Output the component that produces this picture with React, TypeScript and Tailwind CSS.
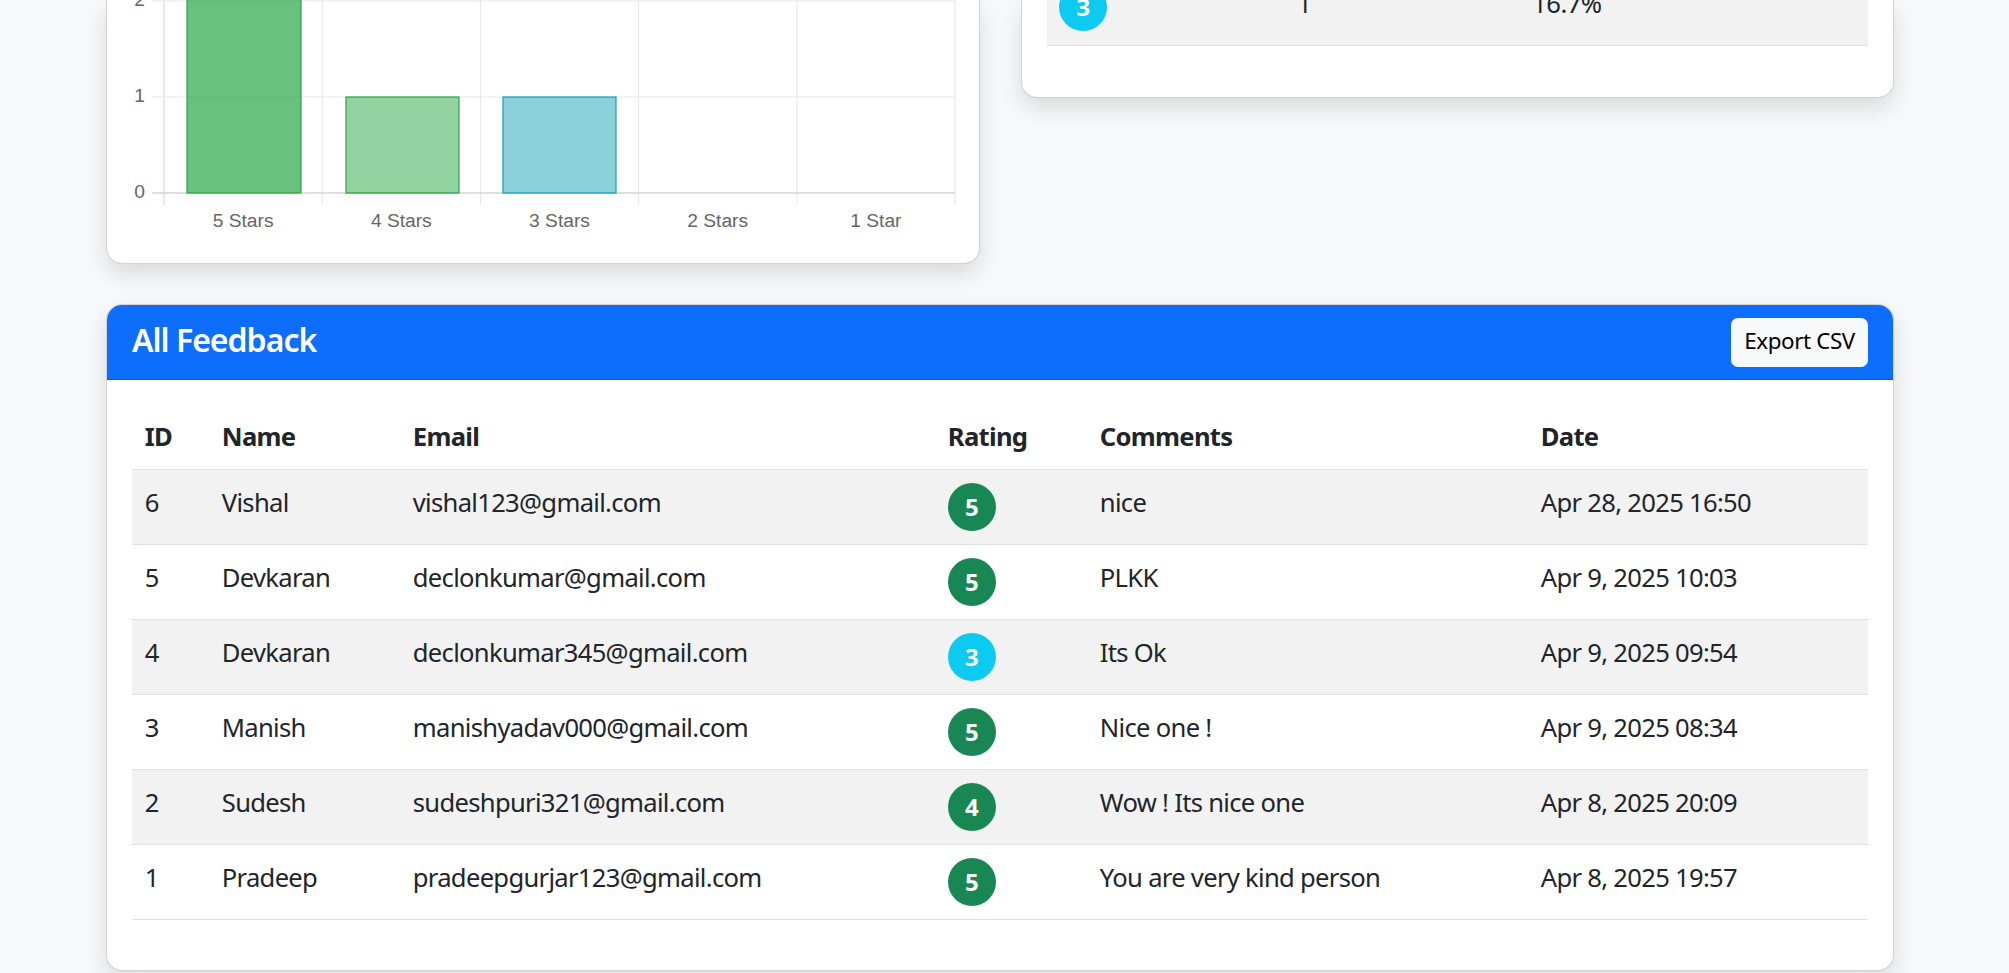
import React from "react";

type Row = { id: number; name: string; email: string; rating: number; comment: string; date: string };

const rows: Row[] = [
  { id: 6, name: "Vishal", email: "vishal123@gmail.com", rating: 5, comment: "nice", date: "Apr 28, 2025 16:50" },
  { id: 5, name: "Devkaran", email: "declonkumar@gmail.com", rating: 5, comment: "PLKK", date: "Apr 9, 2025 10:03" },
  { id: 4, name: "Devkaran", email: "declonkumar345@gmail.com", rating: 3, comment: "Its Ok", date: "Apr 9, 2025 09:54" },
  { id: 3, name: "Manish", email: "manishyadav000@gmail.com", rating: 5, comment: "Nice one !", date: "Apr 9, 2025 08:34" },
  { id: 2, name: "Sudesh", email: "sudeshpuri321@gmail.com", rating: 4, comment: "Wow ! Its nice one", date: "Apr 8, 2025 20:09" },
  { id: 1, name: "Pradeep", email: "pradeepgurjar123@gmail.com", rating: 5, comment: "You are very kind person", date: "Apr 8, 2025 19:57" },
];

function Badge({ value }: { value: number }) {
  const color = value === 3 ? "bg-[#0dcaf0]" : "bg-[#198754]";
  return (
    <span
      className={`inline-flex h-[48px] w-[48px] items-center justify-center rounded-full ${color} text-[24px] font-bold leading-none tracking-normal text-white`}
    >
      {value}
    </span>
  );
}

function Chart() {
  const step = 158.2;
  const x0 = 32;
  const verticals = [0, 1, 2, 3, 4, 5].map((i) => x0 + i * step);
  const labels = ["5 Stars", "4 Stars", "3 Stars", "2 Stars", "1 Star"];
  const font = { fontFamily: "'Liberation Sans', Arial, sans-serif", fontSize: 19.2 };
  return (
    <svg width="824" height="237" viewBox="0 0 824 237" className="block overflow-visible">
      {verticals.map((x, i) => (
        <line key={`v${i}`} x1={x} y1={-10} x2={x} y2={205} stroke={i === 0 ? "#d4d4d4" : "#e6e6e6"} strokeWidth={1} />
      ))}
      {[1, 97].map((y) => (
        <line key={`h${y}`} x1={20} y1={y} x2={823} y2={y} stroke="#e6e6e6" strokeWidth={1} />
      ))}
      <line x1={20} y1={193} x2={823} y2={193} stroke="#d4d4d4" strokeWidth={1.5} />
      <rect x={55} y={-220} width={114} height={413} fill="rgba(40,167,69,0.7)" stroke="#28a745" strokeWidth={1.2} />
      <rect x={214} y={97} width={113} height={96} fill="rgba(40,167,69,0.5)" stroke="#28a745" strokeWidth={1.2} />
      <rect x={371} y={97} width={113} height={96} fill="rgba(23,162,184,0.5)" stroke="#17a2b8" strokeWidth={1.2} />
      {[
        ["2", 1],
        ["1", 97],
        ["0", 193],
      ].map(([t, y]) => (
        <text key={String(t)} x={13} y={Number(y)} textAnchor="end" dominantBaseline="middle" fill="#666" style={font}>
          {t}
        </text>
      ))}
      {labels.map((l, i) => (
        <text key={l} x={x0 + step / 2 + i * step} y={227} textAnchor="middle" fill="#666" style={font}>
          {l}
        </text>
      ))}
    </svg>
  );
}

const td = "px-[12.8px] pb-[7px] align-middle";

export default function App() {
  return (
    <div
      className="min-h-screen bg-[#f8f9fa] text-[#212529]"
      style={{ fontFamily: "'Segoe UI', 'Noto Sans', 'Open Sans', sans-serif" }}
    >
      <div className="ml-[106px] w-[1788px]">
        <div className="grid grid-cols-2 items-start gap-x-[41px]">
          <div className="rounded-b-[16px] border border-t-0 border-[rgba(0,0,0,0.175)] bg-white px-[25px] pb-[26px] shadow-[0_10px_24px_rgba(0,0,0,0.13)]">
            <Chart />
          </div>
          <div className="rounded-b-[16px] border border-t-0 border-[rgba(0,0,0,0.175)] bg-white px-[25px] pb-[51px] shadow-[0_10px_24px_rgba(0,0,0,0.13)]">
            <table className="-mt-[30px] w-full table-fixed border-collapse text-[25.6px] tracking-[-0.6px]">
              <colgroup>
                <col className="w-[238px]" />
                <col className="w-[235px]" />
                <col />
              </colgroup>
              <tbody>
                <tr className="h-[75px] border-b border-[#dee2e6] bg-[#f2f2f2]">
                  <td className="px-[12.8px] align-middle">
                    <Badge value={3} />
                  </td>
                  <td className={td}>1</td>
                  <td className={td}>16.7%</td>
                </tr>
              </tbody>
            </table>
          </div>
        </div>

        <div className="mt-[40px] overflow-hidden rounded-[16px] border border-[rgba(0,0,0,0.175)] bg-white shadow-[0_10px_24px_rgba(0,0,0,0.13)]">
          <div className="flex h-[75px] items-center justify-between border-b border-[#0b5bd1] bg-[#0d6efd] px-[25px]">
            <h5 className="pb-[4px] text-[32px] font-semibold leading-[1.2] tracking-[-1px] text-white">All Feedback</h5>
            <button className="flex h-[49px] w-[137px] items-center justify-center rounded-[7px] bg-[#f8f9fa] pb-[2px] text-[22.4px] leading-none tracking-[-0.4px] text-black">
              Export CSV
            </button>
          </div>
          <div className="px-[25px] pb-[50px] pt-[25.6px]">
            <table className="w-full table-fixed border-collapse text-left text-[25.6px] tracking-[-0.7px]">
              <colgroup>
                <col className="w-[77px]" />
                <col className="w-[191px]" />
                <col className="w-[535px]" />
                <col className="w-[152px]" />
                <col className="w-[441px]" />
                <col />
              </colgroup>
              <thead>
                <tr className="h-[64px] border-b border-[#dee2e6]">
                  {["ID", "Name", "Email", "Rating", "Comments", "Date"].map((h) => (
                    <th key={h} className="px-[12.8px] pb-[1px] align-middle font-bold">
                      {h}
                    </th>
                  ))}
                </tr>
              </thead>
              <tbody>
                {rows.map((r, i) => (
                  <tr key={r.id} className={`h-[75px] border-b border-[#dee2e6] ${i % 2 === 0 ? "bg-[#f2f2f2]" : "bg-white"}`}>
                    <td className={td}>{r.id}</td>
                    <td className={td}>{r.name}</td>
                    <td className={td}>{r.email}</td>
                    <td className="px-[12.8px] align-middle">
                      <Badge value={r.rating} />
                    </td>
                    <td className={td}>{r.comment}</td>
                    <td className={td}>{r.date}</td>
                  </tr>
                ))}
              </tbody>
            </table>
          </div>
        </div>
      </div>
    </div>
  );
}
